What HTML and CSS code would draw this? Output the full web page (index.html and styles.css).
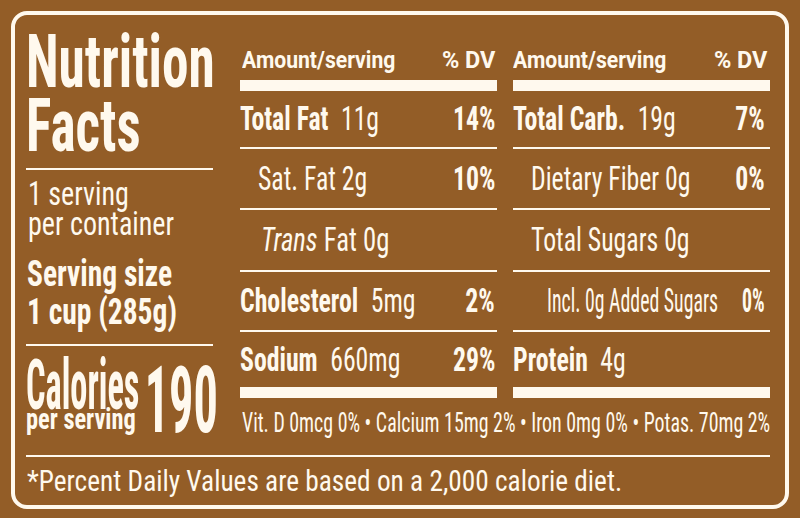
FILE: index.html
```html
<!DOCTYPE html>
<html lang="en">
<head>
<meta charset="utf-8">
<title>Nutrition Facts</title>
<link rel="stylesheet" href="styles.css">
</head>
<body>
<div class="label">
  <section class="left">
    <div class="title"><span class="s">Nutrition</span></div>
    <div class="title"><span class="s">Facts</span></div>
    <div class="lrule"></div>
    <div class="servings">
      <div><span class="s">1 serving</span></div>
      <div><span class="s">per container</span></div>
    </div>
    <div class="size">
      <div><span class="s">Serving size</span></div>
      <div><span class="s">1 cup (285g)</span></div>
    </div>
    <div class="lrule low"></div>
    <div class="cal">
      <div class="cal-text">
        <div class="cal-word"><span class="s">Calories</span></div>
        <div class="cal-per"><span class="s">per serving</span></div>
      </div>
      <div class="cal-num"><span class="s r">190</span></div>
    </div>
  </section>

  <section class="col mid">
    <div class="head"><span class="s">Amount/serving</span><span class="s r">% DV</span></div>
    <div class="bar"></div>
    <div class="row"><span class="s"><b>Total Fat</b><span class="amt">11g</span></span><span class="s r pct">14%</span></div>
    <div class="line"></div>
    <div class="row sub"><span class="s">Sat. Fat 2g</span><span class="s r pct">10%</span></div>
    <div class="line"></div>
    <div class="row sub trans"><span class="s"><i>Trans</i> Fat 0g</span></div>
    <div class="line"></div>
    <div class="row"><span class="s"><b>Cholesterol</b><span class="amt">5mg</span></span><span class="s r pct">2%</span></div>
    <div class="line"></div>
    <div class="row"><span class="s"><b>Sodium</b><span class="amt">660mg</span></span><span class="s r pct">29%</span></div>
    <div class="bar"></div>
  </section>

  <section class="col right">
    <div class="head"><span class="s">Amount/serving</span><span class="s r">% DV</span></div>
    <div class="bar"></div>
    <div class="row"><span class="s"><b>Total Carb.</b><span class="amt">19g</span></span><span class="s r pct">7%</span></div>
    <div class="line"></div>
    <div class="row sub"><span class="s">Dietary Fiber 0g</span><span class="s r pct">0%</span></div>
    <div class="line"></div>
    <div class="row sub"><span class="s">Total Sugars 0g</span></div>
    <div class="line"></div>
    <div class="row sub2"><span class="s">Incl. 0g Added Sugars</span><span class="s r pct">0%</span></div>
    <div class="line"></div>
    <div class="row"><span class="s"><b>Protein</b><span class="amt">4g</span></span></div>
    <div class="bar"></div>
  </section>

  <div class="vit"><span class="s">Vit. D 0mcg 0% • Calcium 15mg 2% • Iron 0mg 0% • Potas. 70mg 2%</span></div>
  <div class="frule"></div>
  <div class="foot"><span class="s">*Percent Daily Values are based on a 2,000 calorie diet.</span></div>
</div>
</body>
</html>
```
FILE: styles.css
```css
* { box-sizing: border-box; margin: 0; padding: 0; }
html, body { width: 800px; height: 518px; overflow: hidden; }
body {
  background: #935D27;
  color: #FFF9EE;
  font-family: Roboto, "Open Sans", sans-serif;
  font-stretch: 75%;
  padding: 11px 11px 9px;
}
.label {
  height: 498px;
  border: 4px solid #FFF9EE;
  border-radius: 16px;
  padding: 15px 15px 0 11px;
  display: grid;
  grid-template-columns: 198px 257px 257px;
  grid-template-rows: 368px 57px 2px auto;
  column-gap: 16px;
  grid-template-areas:
    "left mid right"
    "left vit vit"
    "rule rule rule"
    "foot foot foot";
  overflow: hidden;
}
.s { display: inline-block; white-space: nowrap; transform-origin: left center; }
.s.r { transform-origin: right center; }

/* left column */
.left { grid-area: left; padding-right: 11px; min-width: 0; }
.title { font-size: 74px; font-weight: 700; line-height: 64px; height: 64px; }
.title .s { transform: scaleX(.72); }
.lrule { height: 2px; background: #FFF9EE; margin-top: 10px; }
.lrule.low { margin-top: 13px; }
.servings { margin-top: 9px; padding-left: 2px; font-size: 33px; line-height: 30px; }
.servings .s { transform: scaleX(.85); }
.size { margin-top: 16px; padding-left: 1px; font-size: 36px; font-weight: 700; line-height: 38px; }
.size .s { transform: scaleX(.82); }
.cal {
  margin-top: 17px;
  margin-right: -5px;
  display: grid;
  grid-template-columns: minmax(0, 1fr);
}
.cal > * { grid-area: 1 / 1; min-width: 0; }
.cal-word { font-size: 70px; font-weight: 700; line-height: 44px; }
.cal-word .s { transform: scaleX(.49); }
.cal-per { margin-top: 3px; font-size: 29px; font-weight: 700; line-height: 18px; }
.cal-per .s { transform: scaleX(.84); }
.cal-num { justify-self: end; margin-top: 5px; font-size: 93px; font-weight: 700; line-height: 66px; }
.cal-num .s { transform: scaleX(.52); }

/* nutrient columns */
.col {
  display: grid;
  grid-template-columns: minmax(0, 1fr);
  grid-template-rows: 50px 11px 56px 2px 59px 2px 60px 2px 58px 2px 55px 11px;
  min-width: 0;
}
.mid { grid-area: mid; }
.right { grid-area: right; }
.bar, .line { background: #FFF9EE; }
.head {
  display: grid;
  grid-template-columns: minmax(0, 1fr);
  align-items: start;
  padding: 18px 0 0 2px;
  font-size: 23px;
  font-weight: 700;
  line-height: 26px;
  font-stretch: 100%;
}
.head > * { grid-area: 1 / 1; }
.head .s { transform: scaleX(.92); }
.head .r { justify-self: end; margin-right: 2px; transform: scaleX(1.02); }
.right .head { padding-left: 0; }
.right .head .r { margin-right: 3px; }
.row {
  display: grid;
  grid-template-columns: minmax(0, 1fr);
  align-items: center;
  font-size: 33px;
  line-height: 40px;
  min-width: 0;
}
.row > * { grid-area: 1 / 1; }
.row .s { transform: scaleX(.78); }
.row .pct { justify-self: end; font-weight: 700; transform: scaleX(.78); margin-right: 2px; }
.right .row .pct { margin-right: 5px; }
.sub { padding-left: 18px; }
.trans { padding-left: 21px; }
.trans .s { transform: scaleX(.81); }
.sub2 { padding-left: 34px; }
.sub2 .s { transform: scaleX(.6); }
.amt { margin-left: 16px; }

/* bottom */
.vit { grid-area: vit; padding: 10px 0 0 2px; font-size: 28px; line-height: 30px; min-width: 0; }
.vit .s { transform: scaleX(.71); }
.frule { grid-area: rule; background: #FFF9EE; }
.foot { grid-area: foot; padding: 7px 0 0 1px; font-size: 30px; line-height: 34px; min-width: 0; }
.foot .s { transform: scaleX(.91); }
```
